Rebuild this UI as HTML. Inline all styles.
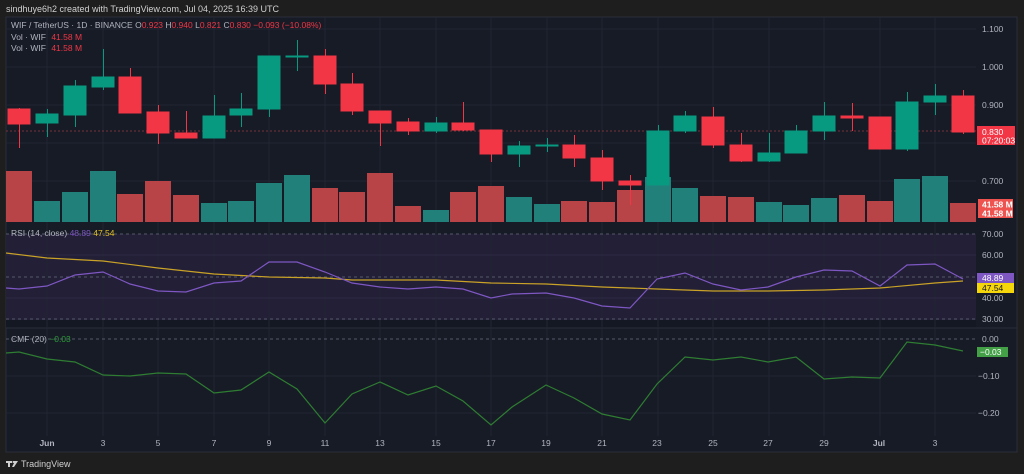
<!DOCTYPE html>
<html><head><meta charset="utf-8"><style>
html,body{margin:0;padding:0;background:#1e1e1e;width:1024px;height:474px;overflow:hidden}
svg{display:block;font-family:"Liberation Sans",sans-serif}
</style></head><body>
<svg width="1024" height="474" viewBox="0 0 1024 474" xmlns="http://www.w3.org/2000/svg">
<rect width="1024" height="474" fill="#1e1e1e"/>
<text x="6" y="12" font-size="9" fill="#d0d0d0">sindhuye6h2 created with TradingView.com, Jul 04, 2025 16:39 UTC</text>
<rect x="6" y="17" width="1011" height="435" fill="#171b26" stroke="#2a2e39" stroke-width="1"/>
<!-- RSI band -->
<rect x="6" y="234" width="970" height="86" fill="#221f37"/>
<rect x="6" y="320" width="970" height="8" fill="#141823"/>
<line x1="6" y1="328" x2="1017" y2="328" stroke="#2a2e39"/>
<!-- vertical grid -->
<g stroke="#222633" stroke-width="1">
<line x1="47" y1="17" x2="47" y2="436"/><line x1="103" y1="17" x2="103" y2="436"/><line x1="158" y1="17" x2="158" y2="436"/><line x1="214" y1="17" x2="214" y2="436"/><line x1="269" y1="17" x2="269" y2="436"/><line x1="325" y1="17" x2="325" y2="436"/><line x1="380" y1="17" x2="380" y2="436"/><line x1="436" y1="17" x2="436" y2="436"/><line x1="491" y1="17" x2="491" y2="436"/><line x1="547" y1="17" x2="547" y2="436"/><line x1="602" y1="17" x2="602" y2="436"/><line x1="658" y1="17" x2="658" y2="436"/><line x1="713" y1="17" x2="713" y2="436"/><line x1="769" y1="17" x2="769" y2="436"/><line x1="824" y1="17" x2="824" y2="436"/><line x1="880" y1="17" x2="880" y2="436"/><line x1="935" y1="17" x2="935" y2="436"/>
<line x1="6" y1="29" x2="976" y2="29"/><line x1="6" y1="67" x2="976" y2="67"/><line x1="6" y1="105" x2="976" y2="105"/><line x1="6" y1="143" x2="976" y2="143"/><line x1="6" y1="181" x2="976" y2="181"/>
<line x1="6" y1="255" x2="976" y2="255" stroke="#2d2a45"/><line x1="6" y1="298" x2="976" y2="298" stroke="#2d2a45"/>
<line x1="6" y1="376" x2="976" y2="376"/><line x1="6" y1="413" x2="976" y2="413"/>
</g>
<g stroke="#55596a" stroke-dasharray="3,3" stroke-width="1">
<line x1="6" y1="234" x2="976" y2="234"/><line x1="6" y1="277" x2="976" y2="277"/><line x1="6" y1="319" x2="976" y2="319"/><line x1="6" y1="339" x2="976" y2="339"/>
</g>
<line x1="6" y1="131" x2="976" y2="131" stroke="#7a3038" stroke-dasharray="2,2"/>
<!-- volume -->
<g>
<rect x="6" y="171" width="26" height="51" fill="#b84447"/>
<rect x="34" y="201" width="26" height="21" fill="#22807a"/>
<rect x="62" y="192" width="26" height="30" fill="#22807a"/>
<rect x="90" y="171" width="26" height="51" fill="#22807a"/>
<rect x="117" y="194" width="26" height="28" fill="#b84447"/>
<rect x="145" y="181" width="26" height="41" fill="#b84447"/>
<rect x="173" y="195" width="26" height="27" fill="#b84447"/>
<rect x="201" y="203" width="26" height="19" fill="#22807a"/>
<rect x="228" y="201" width="26" height="21" fill="#22807a"/>
<rect x="256" y="183" width="26" height="39" fill="#22807a"/>
<rect x="284" y="175" width="26" height="47" fill="#22807a"/>
<rect x="312" y="188" width="26" height="34" fill="#b84447"/>
<rect x="339" y="192" width="26" height="30" fill="#b84447"/>
<rect x="367" y="173" width="26" height="49" fill="#b84447"/>
<rect x="395" y="206" width="26" height="16" fill="#b84447"/>
<rect x="423" y="210" width="26" height="12" fill="#22807a"/>
<rect x="450" y="192" width="26" height="30" fill="#b84447"/>
<rect x="478" y="186" width="26" height="36" fill="#b84447"/>
<rect x="506" y="197" width="26" height="25" fill="#22807a"/>
<rect x="534" y="204" width="26" height="18" fill="#22807a"/>
<rect x="561" y="201" width="26" height="21" fill="#b84447"/>
<rect x="589" y="202" width="26" height="20" fill="#b84447"/>
<rect x="617" y="190" width="26" height="32" fill="#b84447"/>
<rect x="645" y="177" width="26" height="45" fill="#22807a"/>
<rect x="672" y="188" width="26" height="34" fill="#22807a"/>
<rect x="700" y="196" width="26" height="26" fill="#b84447"/>
<rect x="728" y="197" width="26" height="25" fill="#b84447"/>
<rect x="756" y="202" width="26" height="20" fill="#22807a"/>
<rect x="783" y="205" width="26" height="17" fill="#22807a"/>
<rect x="811" y="198" width="26" height="24" fill="#22807a"/>
<rect x="839" y="195" width="26" height="27" fill="#b84447"/>
<rect x="867" y="201" width="26" height="21" fill="#b84447"/>
<rect x="894" y="179" width="26" height="43" fill="#22807a"/>
<rect x="922" y="176" width="26" height="46" fill="#22807a"/>
<rect x="950" y="203" width="26" height="19" fill="#b84447"/>
</g>
<!-- candles -->
<g stroke-width="1">
<g stroke="#f23645" fill="#f23645">
<line x1="19.5" y1="108" x2="19.5" y2="148"/><rect x="8" y="109" width="22" height="15"/>
<line x1="130.5" y1="68" x2="130.5" y2="113"/><rect x="119" y="77" width="22" height="36"/>
<line x1="158.5" y1="105" x2="158.5" y2="144"/><rect x="147" y="112" width="22" height="21"/>
<line x1="186.5" y1="111" x2="186.5" y2="138"/><rect x="175" y="133" width="22" height="5"/>
<line x1="325.5" y1="49" x2="325.5" y2="94"/><rect x="314" y="56" width="22" height="28"/>
<line x1="352.5" y1="73" x2="352.5" y2="115"/><rect x="341" y="84" width="22" height="27"/>
<line x1="380.5" y1="111" x2="380.5" y2="146"/><rect x="369" y="111" width="22" height="12"/>
<line x1="408.5" y1="118" x2="408.5" y2="135"/><rect x="397" y="122" width="22" height="9"/>
<line x1="463.5" y1="102" x2="463.5" y2="131"/><rect x="452" y="123" width="22" height="7"/>
<line x1="491.5" y1="130" x2="491.5" y2="162"/><rect x="480" y="130" width="22" height="24"/>
<line x1="574.5" y1="135" x2="574.5" y2="167"/><rect x="563" y="145" width="22" height="13"/>
<line x1="602.5" y1="150" x2="602.5" y2="190"/><rect x="591" y="158" width="22" height="23"/>
<line x1="630.5" y1="175" x2="630.5" y2="205"/><rect x="619" y="181" width="22" height="4"/>
<line x1="713.5" y1="107" x2="713.5" y2="148"/><rect x="702" y="117" width="22" height="28"/>
<line x1="741.5" y1="133" x2="741.5" y2="162"/><rect x="730" y="145" width="22" height="16"/>
<line x1="852.5" y1="103" x2="852.5" y2="131"/><rect x="841" y="116" width="22" height="2"/>
<line x1="880.5" y1="117" x2="880.5" y2="149"/><rect x="869" y="117" width="22" height="32"/>
<line x1="963.5" y1="90" x2="963.5" y2="134"/><rect x="952" y="96" width="22" height="36"/>
</g>
<g stroke="#089981" fill="#089981">
<line x1="47.5" y1="109" x2="47.5" y2="137"/><rect x="36" y="114" width="22" height="9"/>
<line x1="75.5" y1="80" x2="75.5" y2="127"/><rect x="64" y="86" width="22" height="29"/>
<line x1="103.5" y1="49" x2="103.5" y2="90"/><rect x="92" y="77" width="22" height="10"/>
<line x1="214.5" y1="95" x2="214.5" y2="138"/><rect x="203" y="116" width="22" height="22"/>
<line x1="241.5" y1="93" x2="241.5" y2="127"/><rect x="230" y="109" width="22" height="6"/>
<line x1="269.5" y1="56" x2="269.5" y2="117"/><rect x="258" y="56" width="22" height="53"/>
<line x1="297.5" y1="40" x2="297.5" y2="71"/><rect x="286" y="56" width="22" height="1"/>
<line x1="436.5" y1="117" x2="436.5" y2="133"/><rect x="425" y="123" width="22" height="8"/>
<line x1="519.5" y1="141" x2="519.5" y2="167"/><rect x="508" y="146" width="22" height="8"/>
<line x1="547.5" y1="138" x2="547.5" y2="152"/><rect x="536" y="145" width="22" height="1"/>
<line x1="658.5" y1="125" x2="658.5" y2="185"/><rect x="647" y="131" width="22" height="54"/>
<line x1="685.5" y1="111" x2="685.5" y2="133"/><rect x="674" y="116" width="22" height="15"/>
<line x1="769.5" y1="133" x2="769.5" y2="162"/><rect x="758" y="153" width="22" height="8"/>
<line x1="796.5" y1="125" x2="796.5" y2="153"/><rect x="785" y="131" width="22" height="22"/>
<line x1="824.5" y1="102" x2="824.5" y2="140"/><rect x="813" y="116" width="22" height="15"/>
<line x1="907.5" y1="92" x2="907.5" y2="151"/><rect x="896" y="102" width="22" height="47"/>
<line x1="935.5" y1="84" x2="935.5" y2="115"/><rect x="924" y="96" width="22" height="6"/>
</g>
</g>
<!-- RSI lines -->
<polyline fill="none" stroke="#c9a227" stroke-width="1.2" points="6,253 47,258 103,261 158,268 214,274 269,277 325,278 352,280 436,280 491,283 546,284 602,287 657,289 713,291 768,291 824,290 880,288 935,283 963,281"/>
<polyline fill="none" stroke="#7e57c2" stroke-width="1.2" points="6,288 19,289 47,286 75,275 103,272 130,284 158,291 186,292 214,283 241,281 269,262 297,262 325,272 352,283 380,287 408,289 436,287 463,289 491,298 512,294 546,293 574,298 602,306 630,308 657,279 685,273 713,284 741,290 768,287 796,277 824,270 852,271 880,286 907,265 935,264 963,279"/>
<!-- CMF -->
<polyline fill="none" stroke="#2e7d32" stroke-width="1.2" points="6,353 19,352 47,359 75,362 103,375 130,376 158,373 186,374 214,393 241,390 269,372 297,389 325,423 352,394 380,382 408,395 436,386 463,401 491,425 512,407 546,385 574,398 602,414 630,420 657,384 685,357 713,360 741,357 768,362 796,357 824,379 852,377 880,378 907,342 935,345 963,351"/>
<!-- legends -->
<g font-size="8.5">
<text x="11" y="28" fill="#b2b5be">WIF / TetherUS · 1D · BINANCE <tspan>O</tspan><tspan fill="#f23645">0.923</tspan> H<tspan fill="#f23645">0.940</tspan> L<tspan fill="#f23645">0.821</tspan> C<tspan fill="#f23645">0.830</tspan> <tspan fill="#f23645">−0.093 (−10.08%)</tspan></text>
<text x="11" y="40" fill="#b2b5be">Vol · WIF <tspan fill="#f23645" dx="3">41.58 M</tspan></text>
<text x="11" y="51" fill="#b2b5be">Vol · WIF <tspan fill="#f23645" dx="3">41.58 M</tspan></text>
<text x="11" y="236" fill="#b2b5be">RSI (14, close) <tspan fill="#7e57c2">48.89</tspan> <tspan fill="#e6c229">47.54</tspan></text>
<text x="11" y="342" fill="#b2b5be">CMF (20) <tspan fill="#2e9d3a">−0.03</tspan></text>
</g>
<!-- right axis -->
<g font-size="8.5" fill="#b2b5be">
<text x="982" y="32">1.100</text><text x="982" y="70">1.000</text><text x="982" y="108">0.900</text><text x="982" y="184">0.700</text>
<text x="982" y="237">70.00</text><text x="982" y="258">60.00</text><text x="982" y="301">40.00</text><text x="982" y="322">30.00</text>
<text x="982" y="342">0.00</text><text x="978" y="379">−0.10</text><text x="978" y="416">−0.20</text>
</g>
<rect x="977" y="126" width="38" height="19" fill="#f23645"/>
<text x="982" y="135" font-size="8.5" fill="#fff">0.830</text>
<text x="982" y="143.5" font-size="8.5" fill="#fff">07:20:03</text>
<rect x="978" y="199" width="35" height="19" fill="#ef5350"/>
<text x="982" y="207.5" font-size="8.5" fill="#fff" font-weight="bold">41.58 M</text>
<text x="982" y="216.5" font-size="8.5" fill="#fff" font-weight="bold">41.58 M</text>
<rect x="977" y="273" width="37" height="10" fill="#7e57c2"/>
<text x="982" y="281" font-size="8.5" fill="#fff">48.89</text>
<rect x="977" y="283" width="37" height="10" fill="#f5d60a"/>
<text x="982" y="291" font-size="8.5" fill="#131722">47.54</text>
<rect x="977" y="347" width="31" height="10" fill="#43a047"/>
<text x="980" y="355" font-size="8.5" fill="#fff">−0.03</text>
<!-- time axis -->
<g font-size="8.5" fill="#b2b5be" text-anchor="middle">
<text x="47" y="446" font-weight="bold">Jun</text><text x="103" y="446">3</text><text x="158" y="446">5</text><text x="214" y="446">7</text><text x="269" y="446">9</text><text x="325" y="446">11</text><text x="380" y="446">13</text><text x="436" y="446">15</text><text x="491" y="446">17</text><text x="546" y="446">19</text><text x="602" y="446">21</text><text x="657" y="446">23</text><text x="713" y="446">25</text><text x="768" y="446">27</text><text x="824" y="446">29</text><text x="879" y="446" font-weight="bold">Jul</text><text x="935" y="446">3</text>
</g>
<!-- logo -->
<g fill="#d0d0d0">
<rect x="6" y="461" width="6" height="2"/><rect x="8" y="461" width="2" height="6"/>
<polygon points="13,461 18,461 14,467 12,467 14,463"/>
<circle cx="13.5" cy="462" r="1"/>
</g>
<text x="21" y="467" font-size="9" fill="#d0d0d0">TradingView</text>
</svg>
</body></html>
